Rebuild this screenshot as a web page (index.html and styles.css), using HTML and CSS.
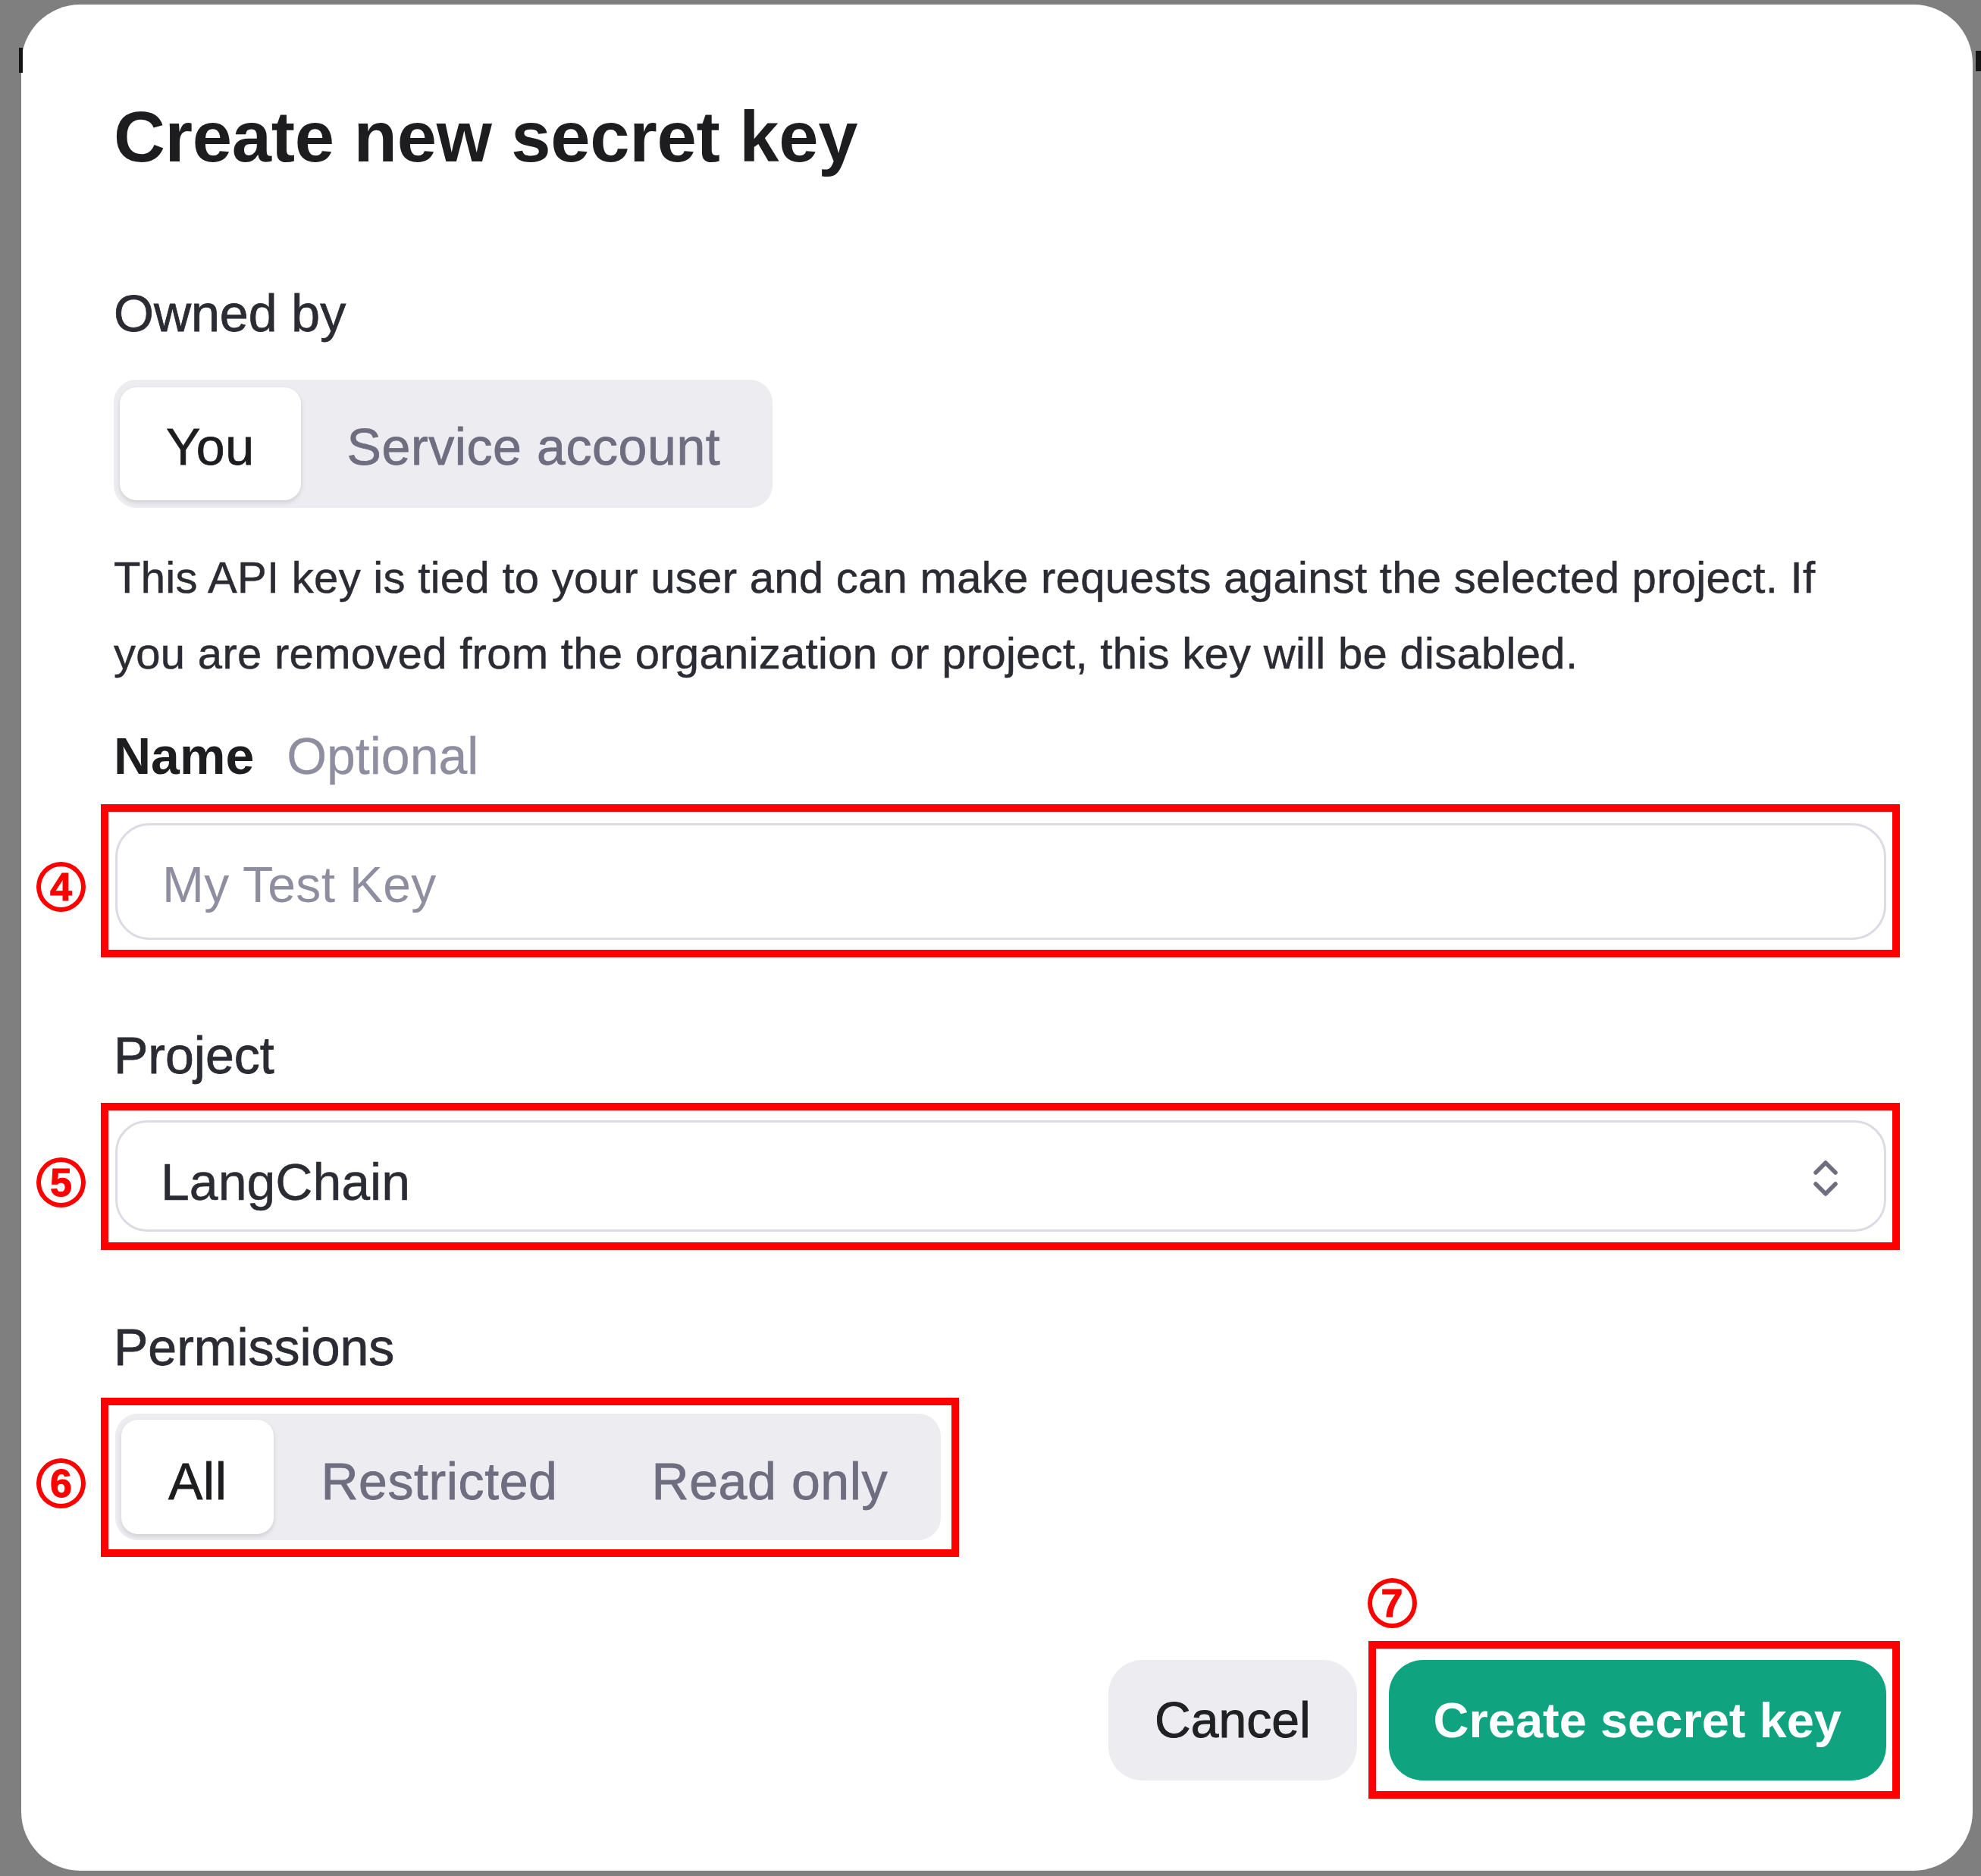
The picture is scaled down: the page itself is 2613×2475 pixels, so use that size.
FILE: index.html
```html
<!DOCTYPE html>
<html lang="en">
<head>
<meta charset="utf-8">
<title>Create new secret key</title>
<link rel="stylesheet" href="styles.css">
</head>
<body>
<div class="dialog">
  <h1 class="title">Create new secret key</h1>
  <div class="label owned">Owned by</div>
  <div class="seg seg-owner">
    <div class="seg-item active">You</div>
    <div class="seg-item">Service account</div>
  </div>
  <p class="desc">This API key is tied to your user and can make requests against the selected project. If you are removed from the organization or project, this key will be disabled.</p>
  <div class="label name-label"><span class="strong">Name</span> <span class="muted">Optional</span></div>
  <div class="mark mark-name">
    <span class="num">4</span>
    <input class="field input" type="text" placeholder="My Test Key">
  </div>
  <div class="label project-label">Project</div>
  <div class="mark mark-project">
    <span class="num">5</span>
    <div class="field select">
      <span class="select-value">LangChain</span>
      <svg class="chev" width="34" height="52" viewBox="0 0 34 52" aria-hidden="true">
        <path d="M4 18 L17 5 L30 18" fill="none" stroke="#6e6e80" stroke-width="5.5" stroke-linecap="round" stroke-linejoin="round"/>
        <path d="M4 33 L17 46 L30 33" fill="none" stroke="#6e6e80" stroke-width="5.5" stroke-linecap="round" stroke-linejoin="round"/>
      </svg>
    </div>
  </div>
  <div class="label perm-label">Permissions</div>
  <div class="mark mark-perm">
    <span class="num">6</span>
    <div class="seg seg-perm">
      <div class="seg-item active">All</div>
      <div class="seg-item">Restricted</div>
      <div class="seg-item">Read only</div>
    </div>
  </div>
  <div class="actions">
    <button class="btn btn-cancel" type="button">Cancel</button>
    <div class="mark mark-submit">
      <span class="num num-top">7</span>
      <button class="btn btn-primary" type="button">Create secret key</button>
    </div>
  </div>
</div>
</body>
</html>
```

FILE: styles.css
```css
html, body {
  margin: 0;
  padding: 0;
}

body {
  box-sizing: border-box;
  width: 2613px;
  height: 2475px;
  padding: 6px 11px 0 28px;
  background: #7f7f7f;
  overflow: hidden;
  position: relative;
  font-family: "Liberation Sans", Arial, sans-serif;
}

body::before,
body::after {
  content: "";
  position: absolute;
  background: #151515;
}

body::before {
  left: 25px;
  top: 63px;
  width: 5px;
  height: 33px;
}

body::after {
  left: 2606px;
  top: 67px;
  width: 7px;
  height: 27px;
}

.dialog {
  box-sizing: border-box;
  height: 2462px;
  background: #ffffff;
  border-radius: 78px;
  padding: 115px 114px 0 122px;
  display: flex;
  flex-direction: column;
}

.title {
  margin: 0;
  font-size: 94px;
  line-height: 120px;
  font-weight: 700;
  color: #1d1d1f;
  letter-spacing: -0.3px;
}

.label {
  font-size: 68px;
  line-height: 80px;
  color: #2b2b33;
  -webkit-text-stroke: 0.8px currentColor;
}

.owned {
  margin-top: 132px;
}

.seg {
  display: flex;
  align-self: flex-start;
  box-sizing: border-box;
  background: #ececf1;
  border-radius: 30px;
}

.seg-owner {
  margin-top: 48px;
  height: 169px;
  padding: 10px 8px;
}

.seg-item {
  display: flex;
  align-items: center;
  font-size: 68px;
  letter-spacing: 0.6px;
  color: #6e6e80;
  border-radius: 22px;
  -webkit-text-stroke: 0.8px currentColor;
}

.seg-owner .seg-item {
  padding: 6px 61px 0;
}

.seg-item.active {
  background: #ffffff;
  color: #1d1d1f;
  box-shadow: 0 3px 6px rgba(0, 0, 0, 0.13);
}

.desc {
  margin: 42px 0 0;
  font-size: 58px;
  line-height: 100px;
  color: #2b2b33;
  letter-spacing: 0.3px;
  -webkit-text-stroke: 0.5px currentColor;
}

.name-label {
  margin-top: 45px;
}

.strong {
  font-weight: 700;
  color: #1d1d1f;
  -webkit-text-stroke: 0;
}

.muted {
  margin-left: 24px;
  color: #8e8ea0;
  -webkit-text-stroke: 0.3px currentColor;
}

.mark {
  position: relative;
  border: 10px solid #ff0000;
  margin-left: -17px;
  margin-right: -18px;
}

.num {
  position: absolute;
  left: -95px;
  top: calc(50% - 25px);
  box-sizing: border-box;
  width: 65px;
  height: 66px;
  border: 6px solid #ff0000;
  border-radius: 50%;
  color: #ff0000;
  font-weight: 700;
  font-size: 52px;
  line-height: 1;
  display: flex;
  align-items: center;
  justify-content: center;
  -webkit-text-stroke: 1px currentColor;
}

.num-top {
  left: -11px;
  top: -93px;
}

.mark-name {
  margin-top: 24px;
  padding: 15px 8px 13px 9px;
}

.field {
  box-sizing: border-box;
  width: 100%;
  border: 3px solid #dcdce4;
  border-radius: 45px;
  background: #ffffff;
}

.input {
  display: block;
  height: 154px;
  padding: 8px 59px 0;
  font-family: "Liberation Sans", Arial, sans-serif;
  font-size: 66px;
  letter-spacing: 0.3px;
  color: #2b2b33;
  outline: none;
}

.input::placeholder {
  color: #8e8ea0;
  opacity: 1;
}

.project-label {
  margin-top: 89px;
}

.mark-project {
  margin-top: 23px;
  padding: 13px 8px 14px 9px;
}

.select {
  height: 147px;
  display: flex;
  align-items: center;
  justify-content: space-between;
  padding: 0 60px 0 57px;
  border-radius: 42px;
}

.select-value {
  padding-top: 14px;
  font-size: 68px;
  color: #2b2b33;
  -webkit-text-stroke: 0.5px currentColor;
}

.chev {
  display: block;
  margin-top: 6px;
}

.perm-label {
  margin-top: 88px;
}

.mark-perm {
  align-self: flex-start;
  margin-top: 27px;
  margin-right: 0;
  padding: 11px 14px 12px 9px;
}

.seg-perm {
  height: 167px;
  padding: 8px;
}

.seg-perm .seg-item {
  padding: 10px 62px 0;
}

.actions {
  margin-top: 111px;
  margin-right: -18px;
  display: flex;
  justify-content: flex-end;
  align-items: center;
  gap: 15px;
}

.mark-submit {
  margin: 0;
  padding: 15px 8px 14px 17px;
}

.btn {
  display: block;
  height: 159px;
  border: 0;
  border-radius: 45px;
  font-family: "Liberation Sans", Arial, sans-serif;
  font-size: 66px;
  cursor: pointer;
}

.btn-cancel {
  padding: 0 61px;
  background: #ececf1;
  color: #202123;
  -webkit-text-stroke: 0.9px currentColor;
}

.btn-primary {
  padding: 0 59px;
  background: #10a37f;
  color: #ffffff;
  font-weight: 700;
  font-size: 65px;
}
```
